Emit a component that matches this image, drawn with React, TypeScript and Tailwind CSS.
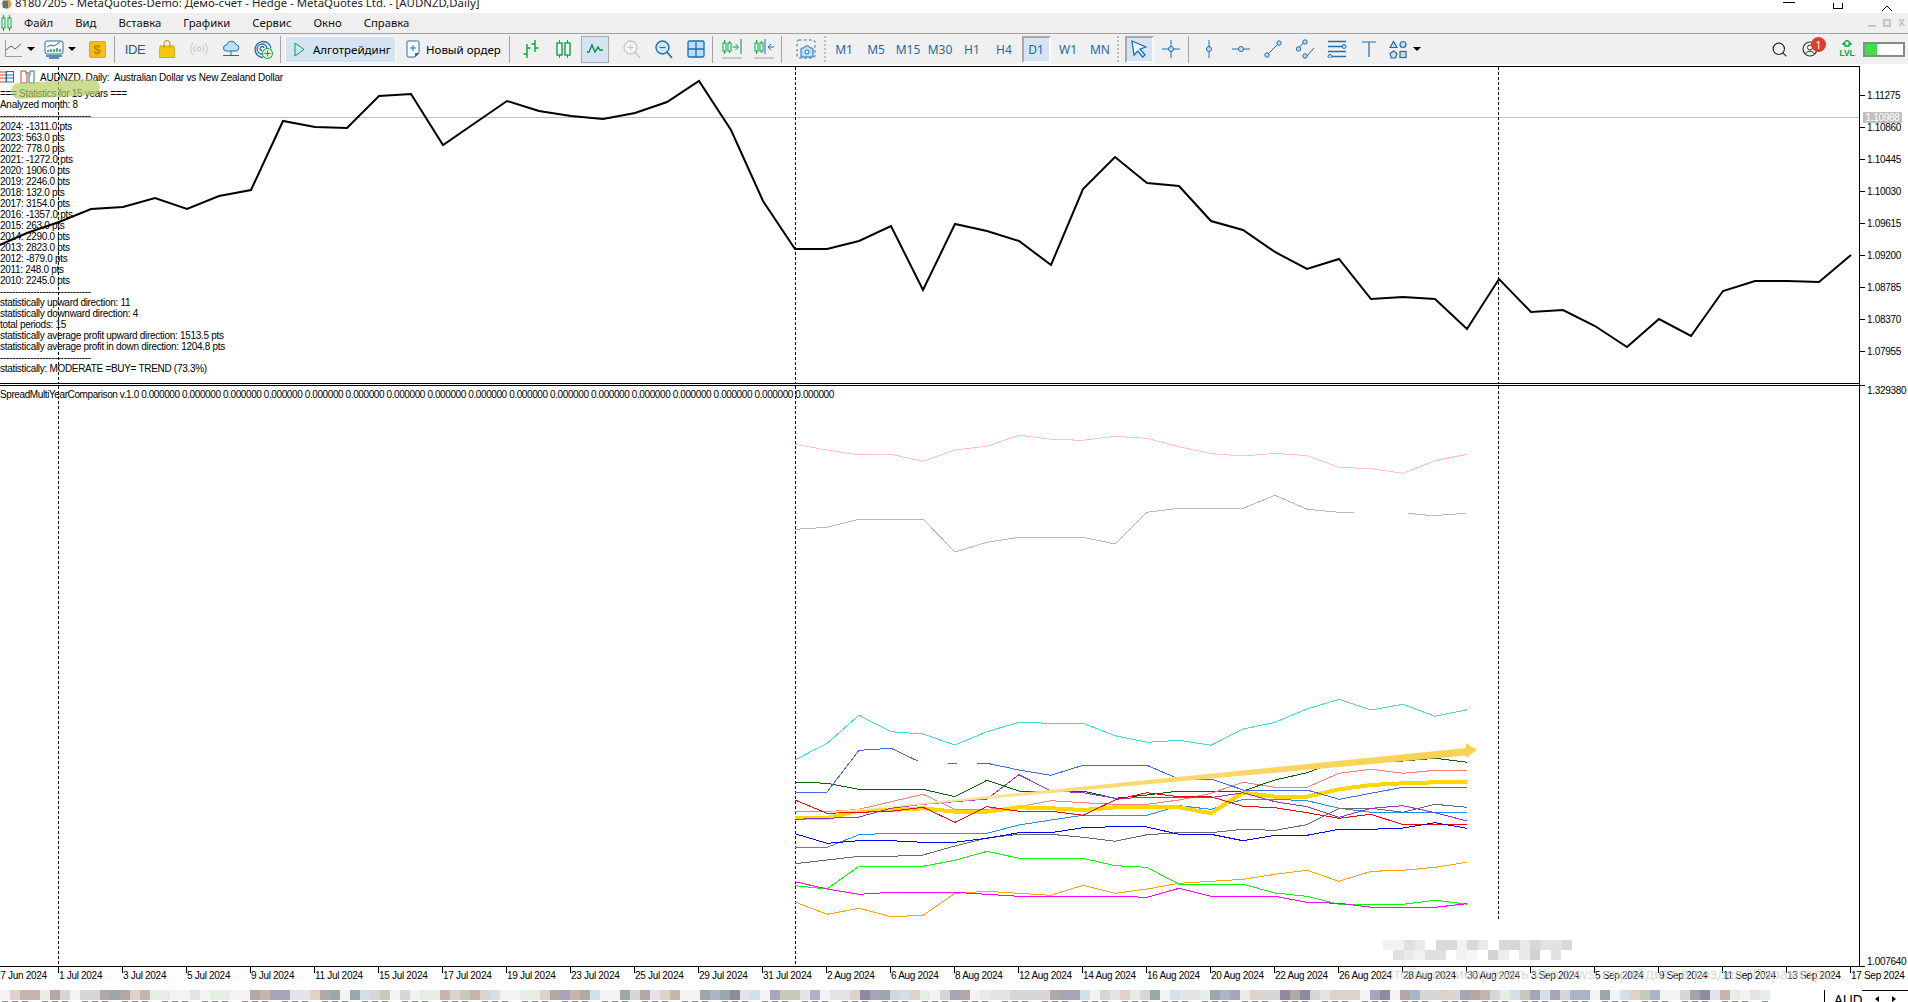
import React from 'react';
import { Search } from 'lucide-react';

const BLUE = '#1c6fb0';
const GREEN = '#00a83c';

const menuItems = ['Файл', 'Вид', 'Вставка', 'Графики', 'Сервис', 'Окно', 'Справка'];
const timeframes = ['M1', 'M5', 'M15', 'M30', 'H1', 'H4', 'D1', 'W1', 'MN'];

const dates = [
  '27 Jun 2024', '1 Jul 2024', '3 Jul 2024', '5 Jul 2024', '9 Jul 2024', '11 Jul 2024', '15 Jul 2024', '17 Jul 2024',
  '19 Jul 2024', '23 Jul 2024', '25 Jul 2024', '29 Jul 2024', '31 Jul 2024', '2 Aug 2024', '6 Aug 2024', '8 Aug 2024',
  '12 Aug 2024', '14 Aug 2024', '16 Aug 2024', '20 Aug 2024', '22 Aug 2024', '26 Aug 2024', '28 Aug 2024', '30 Aug 2024',
  '3 Sep 2024', '5 Sep 2024', '9 Sep 2024', '11 Sep 2024', '13 Sep 2024', '17 Sep 2024',
];

const prices = ['1.11275', '1.10860', '1.10445', '1.10030', '1.09615', '1.09200', '1.08785', '1.08370', '1.07955'];

const stats = [
  '=== Statistics for 15 years ===',
  'Analyzed month: 8',
  '------------------------------',
  '2024: -1311.0 pts', '2023: 563.0 pts', '2022: 778.0 pts', '2021: -1272.0 pts', '2020: 1906.0 pts',
  '2019: 2246.0 pts', '2018: 132.0 pts', '2017: 3154.0 pts', '2016: -1357.0 pts', '2015: 263.0 pts',
  '2014: 2290.0 pts', '2013: 2823.0 pts', '2012: -879.0 pts', '2011: 248.0 pts', '2010: 2245.0 pts',
  '------------------------------',
  'statistically upward direction: 11',
  'statistically downward direction: 4',
  'total periods: 15',
  'statistically average profit upward direction: 1513.5 pts',
  'statistically average profit in down direction: 1204.8 pts',
  '------------------------------',
  'statistically: MODERATE =BUY= TREND (73.3%)',
];

// price line, one y per bar, first bar sits at x=-5, 32px apart
const priceLine = [
  247, 233, 222, 209, 207, 198, 209, 196, 190, 121, 127, 128, 96, 94, 145, 123, 101, 111, 116, 119, 113, 102, 81, 130,
  201, 249, 249, 241, 226, 290, 224, 231, 241, 265, 189, 157, 183, 186, 221, 230, 252, 269, 259, 299, 297, 299, 329,
  279, 312, 310, 326, 347, 319, 336, 291, 281, 281, 282, 255,
];

// indicator series, read off the chart: 22 bars from x=795, values measured in zoomed px
const series: { color: string; ys: number[]; width?: number }[] = [
  { color: '#40e0d0', ys: [210, 160, 76, 125, 132, 165, 125, 97, 100, 100, 137, 157, 151, 166, 117, 97, 57, 28, 60, 43, 79, 59] },
  { color: '#006400', ys: [276, 280, 298, 298, 298, 320, 271, 303, 303, 303, 325, 315, 303, 303, 303, 270, 248, 213, 213, 213, 205, 217] },
  { color: '#fa8072', ys: [365, 365, 358, 335, 313, 358, 358, 350, 332, 338, 343, 343, 330, 310, 277, 292, 292, 250, 238, 250, 241, 241] },
  { color: '#1e90ff', ys: [472, 472, 434, 430, 430, 430, 430, 405, 390, 376, 376, 376, 347, 358, 328, 328, 332, 355, 367, 367, 367, 367] },
  { color: '#696969', ys: [521, 510, 499, 499, 495, 468, 444, 433, 433, 442, 454, 434, 428, 428, 418, 421, 404, 355, 355, 367, 343, 352] },
  { color: '#ffd700', ys: [384, 384, 362, 360, 355, 365, 365, 352, 355, 360, 352, 352, 352, 370, 308, 320, 320, 298, 285, 280, 277, 277], width: 4 },
  { color: '#9932cc', ys: [388, 385, 381, 355, 343, 335, 327, 254, 303, 308, 325, 323, 323, 323, 308, 335, 350, 382, 355, 347, 368, 393] },
  { color: '#ff0000', ys: [330, 370, 367, 364, 352, 397, 350, 364, 364, 376, 330, 308, 320, 320, 349, 353, 368, 385, 373, 404, 404, 404] },
  { color: '#0000ff', ys: [431, 460, 452, 452, 457, 457, 445, 428, 428, 413, 410, 411, 433, 433, 452, 436, 436, 418, 418, 414, 398, 415] },
  { color: '#00ff00', ys: [587, 597, 529, 529, 529, 511, 484, 505, 505, 505, 527, 532, 583, 583, 583, 609, 619, 643, 643, 643, 631, 643] },
  { color: '#ffa500', ys: [636, 673, 655, 680, 676, 610, 604, 610, 616, 586, 610, 597, 580, 574, 568, 553, 541, 574, 544, 541, 532, 517] },
  { color: '#ff00ff', ys: [575, 597, 613, 607, 607, 607, 613, 619, 619, 619, 619, 622, 595, 619, 619, 619, 637, 640, 652, 652, 652, 641] },
];

const royalBlue = [
  [[33, 307], [102, 307], [172, 181], [242, 175], [300, 213]],
  [[365, 220], [385, 220]],
  [[430, 220], [451, 220], [521, 240], [590, 256], [660, 226], [730, 226], [799, 226], [869, 267], [939, 267], [1009, 300], [1078, 300], [1148, 300], [1218, 328], [1287, 310], [1357, 292], [1427, 292], [1497, 292]],
];

const pink = [73, 90, 105, 103, 124, 90, 79, 46, 58, 61, 49, 55, 80, 101, 108, 100, 107, 142, 146, 160, 122, 103];
const silver = [
  [[33, 328], [102, 322], [172, 298], [242, 298], [312, 298], [381, 396], [451, 367], [521, 352], [590, 352], [660, 352], [730, 372], [799, 277], [869, 265], [939, 265], [1009, 265], [1078, 226], [1148, 268], [1218, 277], [1250, 277]],
  [[1368, 280], [1420, 287], [1495, 280]],
];

const lowerX = (z: number) => 780 + z / 2.178;
const lowerY = (z: number) => 690 + z / 3;
const upperY = (z: number) => 420 + z / 3;

const pts = (ys: number[], toY: (z: number) => number) => ys.map((y, k) => `${795 + 32 * k},${toY(y).toFixed(1)}`).join(' ');
const seg = (s: number[][], toY: (z: number) => number) => s.map(([x, y]) => `${lowerX(x).toFixed(1)},${toY(y).toFixed(1)}`).join(' ');

// blurred tab strip, one letter per 10px cell
const palette: Record<string, string> = {
  a: '#f3f3f3', b: '#e4e4e8', c: '#d6d6d6', d: '#c6b5ac', e: '#b3a8a6', f: '#9aa8aa', g: '#a9a5b8', h: '#e6ede4',
  i: '#d2e0ea', j: '#8f8b9e', k: '#dfd2c9', l: '#c6cbb9', m: '#a9b6c8',
};
const strip =
  'akddhecaccefekdhhaabahhaaedggbbkefaficlacahhdkldkiaahhkegdeiaafcebkdaafmfjbiagllbmabbkjgfcikhacgeahbbcccceggiacbkhcfaibbhfmghkccjejcbkkkagjaemcckcgedchilgigcmmafaiklmaacfjbdhabh';
const mosaic = [
  { x: 1383, y: 940, row: ['#f1f1f1', '#f1f1f1', '#dfdfdf', '#e9e9e9', '#ffffff', '#d9d9d9', '#d9d9d9', '#f1f1f1', '#d9d9d9', '#e9e9e9', '#ffffff', '#d7d7d7', '#d7d7d7', '#e9e9e9', '#d7d7d7', '#e2e2e2', '#e2e2e2', '#d9d9d9'] },
  { x: 1393, y: 950, row: ['#e0e0e0', '#e9e9e9', '#f1f1f1', '#e0e0e0', '#dfdfdf', '#ffffff', '#f1f1f1', '#f6f6f6', '#ffffff', '#d2d2d2', '#ededed', '#ffffff', '#e9e9e9', '#d2d2d2', '#ffffff', '#e2e2e2'] },
];

function Slot({ children, className = 'w-[32px]' }: { children?: React.ReactNode; className?: string }) {
  return <div className={`flex h-full shrink-0 items-center justify-center ${className}`}>{children}</div>;
}

function Sep({ className = '' }: { className?: string }) {
  return <div className={`h-[27px] w-px shrink-0 bg-[#a3a3a3] ${className}`} />;
}

function Grip({ className = '' }: { className?: string }) {
  return <div className={`h-[26px] w-[2px] shrink-0 border-l-2 border-dotted border-[#bdbdbd] ${className}`} />;
}

function Caret() {
  return <div className="h-0 w-0 border-x-[4px] border-t-[4px] border-x-transparent border-t-black" />;
}

const I = ({ w = 20, h = 20, children }: { w?: number; h?: number; children: React.ReactNode }) => (
  <svg width={w} height={h} viewBox={`0 0 ${w} ${h}`} fill="none">{children}</svg>
);

function Toolbar() {
  return (
    <div className="flex h-[30px] shrink-0 items-center bg-[#f0f0f0] text-[12px]">
      <Slot className="w-[24px] pl-[2px]">
        <I w={18} h={18}><path d="M1.5 0v16.5H18" stroke="#9a9a9a" /><path d="M2 10l5-4 4 3 6-5" stroke={BLUE} /></I>
      </Slot>
      <Slot className="w-[14px]"><Caret /></Slot>
      <Slot className="ml-[4px] w-[24px]">
        <I w={20} h={19}>
          <rect x="1" y="1" width="18" height="13" rx="2" stroke={BLUE} fill="#fff" />
          <path d="M3 7l4-2 3 1 6-4" stroke={BLUE} />
          <path d="M4 12v-2M7 12V9M10 12v-3M13 12V8M16 12V9" stroke={GREEN} strokeWidth="1.5" />
          <path d="M2 16h16M5 18h10" stroke={BLUE} strokeWidth="1.4" />
        </I>
      </Slot>
      <Slot className="w-[12px]"><Caret /></Slot>
      <Slot className="ml-[3px] w-[32px]">
        <div className="flex h-[17px] w-[17px] items-center justify-center rounded-[2px] border border-[#e2a800] bg-[#f7bd12] font-['Liberation_Sans',sans-serif] text-[13px] font-bold leading-none text-[#bc8500]">$</div>
      </Slot>
      <Sep className="mx-[1px]" />
      <div className="w-[3px] shrink-0" />
      <Slot><span className="font-['Liberation_Sans',sans-serif] text-[13px] tracking-[-0.4px] text-[#15609f]">IDE</span></Slot>
      <Slot>
        <I w={16} h={18}>
          <path d="M1 6h14l1 11.5H0z" fill="#f8c80e" stroke="#d9a514" />
          <path d="M5 8V3.5a3 3 0 0 1 6 0V8" stroke="#c08d10" />
        </I>
      </Slot>
      <Slot>
        <I w={18} h={14}>
          <circle cx="9" cy="7" r="2" stroke="#c4c4c4" />
          <path d="M5.5 3.5a5 5 0 0 0 0 7M12.5 3.5a5 5 0 0 1 0 7M3 1a9 9 0 0 0 0 12M15 1a9 9 0 0 1 0 12" stroke="#c4c4c4" />
        </I>
      </Slot>
      <Slot>
        <I w={18} h={18}>
          <path d="M4.5 11a3 3 0 0 1 0-6 5 5 0 0 1 9.5-.5 3.3 3.3 0 0 1 .2 6.5z" fill="#bfe0f7" stroke={BLUE} />
          <path d="M9 11v4M1 15.5h16" stroke={BLUE} />
        </I>
      </Slot>
      <Slot>
        <I w={19} h={19}>
          <path d="M9 17.5a8 8 0 1 1 8-9M8 14a5 5 0 1 1 5-6M8 10.5a2 2 0 1 1 2-2.5" stroke={BLUE} strokeWidth="1.3" />
          <circle cx="13.5" cy="13.5" r="5" fill="#d8f5df" stroke={GREEN} />
          <path d="M13.5 10.5v6M10.5 13.5h6" stroke={GREEN} />
        </I>
      </Slot>
      <Sep className="mx-[1px]" />
      <div className="ml-[3px] flex h-[27px] w-[111px] shrink-0 items-center border border-[#f7f9fb] bg-[#d5e4f2]">
        <div className="ml-[8px]">
          <I w={11} h={15}><path d="M1 1l9 6.5L1 14z" stroke={GREEN} /></I>
        </div>
        <span className="ml-[8px] font-['Noto_Sans',sans-serif] text-[11.5px] text-black">Алготрейдинг</span>
      </div>
      <div className="flex h-[27px] w-[112px] shrink-0 items-center pl-[10px]">
        <I w={14} h={18}>
          <path d="M2 1h10a1 1 0 0 1 1 1v11l-4 4H2a1 1 0 0 1-1-1V2a1 1 0 0 1 1-1z" fill="#fff" stroke={BLUE} />
          <path d="M7 5v6M4 8h6" stroke={BLUE} />
          <path d="M9 17v-4h4z" fill={BLUE} />
        </I>
        <span className="ml-[6px] font-['Noto_Sans',sans-serif] text-[11.5px] text-black">Новый ордер</span>
      </div>
      <Sep className="mx-[1px]" />
      <div className="w-[4px] shrink-0" />
      <Slot>
        <I w={16} h={18}>
          <path d="M4 4v14M0.5 14H4M4 8h3.5M12 0v12M8.5 4H12M12 8h3.5" stroke={GREEN} strokeWidth="1.4" />
        </I>
      </Slot>
      <Slot>
        <I w={15} h={18}>
          <path d="M3.5 0v18M11.5 0v18" stroke={GREEN} />
          <rect x="1" y="3" width="5" height="12" fill="#fff" stroke={GREEN} strokeWidth="1.4" />
          <rect x="9" y="3" width="5" height="12" fill="#fff" stroke={GREEN} strokeWidth="1.4" />
        </I>
      </Slot>
      <Slot>
        <div className="flex h-[27px] w-[28px] items-center justify-center border border-[#a9a9a9] bg-[#d5e4f2]">
          <I w={17} h={12}><path d="M0 9h2l3-7 3 7 3-5 2 3h3" stroke="#008a3a" strokeWidth="1.3" /></I>
        </div>
      </Slot>
      <div className="w-[5px] shrink-0" />
      <Slot>
        <I w={18} h={19}>
          <circle cx="7.5" cy="7.5" r="6.5" fill="#f4f4f4" stroke="#c8c8c8" strokeWidth="1.4" />
          <path d="M12 12l5 6" stroke="#c8c8c8" strokeWidth="1.6" />
          <path d="M7.5 4.5v6M4.5 7.5h6" stroke="#c8c8c8" />
        </I>
      </Slot>
      <Slot>
        <I w={18} h={19}>
          <circle cx="7.5" cy="7.5" r="6.5" fill="#cfe8fa" stroke={BLUE} strokeWidth="1.4" />
          <path d="M12 12l5 6" stroke={BLUE} strokeWidth="1.6" />
          <path d="M4.5 7.5h6" stroke={BLUE} strokeWidth="1.2" />
        </I>
      </Slot>
      <Slot>
        <I w={18} h={18}>
          <rect x="1" y="1" width="16" height="16" rx="1.5" fill="#b9e0fa" stroke={BLUE} strokeWidth="1.3" />
          <path d="M9 1v16M1 9h16" stroke={BLUE} strokeWidth="1.3" />
        </I>
      </Slot>
      <Sep className="mr-[3px]" />
      <Slot>
        <I w={20} h={20}>
          <path d="M2.5 1v14M7.5 2v12" stroke={GREEN} />
          <rect x="1" y="4" width="3" height="8" fill="#fff" stroke={GREEN} />
          <rect x="6" y="4" width="3" height="8" fill="#fff" stroke={GREEN} />
          <path d="M19 0v15" stroke={BLUE} />
          <path d="M10.5 8H16M13.5 5l3 3-3 3" stroke={GREEN} />
          <path d="M0 19h20" stroke="#a3a3a3" />
        </I>
      </Slot>
      <Slot>
        <I w={20} h={20}>
          <path d="M2.5 1v14M7.5 2v12" stroke={GREEN} />
          <rect x="1" y="4" width="3" height="8" fill="#fff" stroke={GREEN} />
          <rect x="6" y="4" width="3" height="8" fill="#fff" stroke={GREEN} />
          <path d="M11 0v15" stroke={BLUE} />
          <path d="M14 8h6M17 5l-3 3 3 3" stroke={BLUE} />
          <path d="M0 19h20" stroke="#a3a3a3" />
        </I>
      </Slot>
      <Sep className="ml-[1px]" />
      <Slot className="ml-[8px] w-[32px]">
        <I w={20} h={20}>
          <rect x="1" y="1" width="18" height="18" rx="2" stroke={BLUE} strokeDasharray="2.5 2.5" />
          <path d="M6 9h2l1.5-2h3L14 9h2a1 1 0 0 1 1 1v8H5v-8a1 1 0 0 1 1-1z" fill="#bfe0f7" stroke={BLUE} />
          <circle cx="11" cy="13" r="2" fill="#fff" stroke={BLUE} />
        </I>
      </Slot>
      <Grip className="mx-[2px]" />
      {timeframes.map((t) => (
        <Slot key={t}>
          {t === 'D1' ? (
            <div className="flex h-[27px] w-[29px] items-center justify-center border-2 border-t-[#a9a9a9] border-l-[#a9a9a9] border-r-[#f7f9fb] border-b-[#f7f9fb] bg-[#d5e4f2] font-['Noto_Sans',sans-serif] text-[12px] text-[#1f69a6]">{t}</div>
          ) : (
            <span className="font-['Noto_Sans',sans-serif] text-[12px] text-[#1f69a6]">{t}</span>
          )}
        </Slot>
      ))}
      <Grip className="ml-[1px] mr-[4px]" />
      <Slot>
        <div className="flex h-[27px] w-[29px] items-center justify-center border-2 border-t-[#a9a9a9] border-l-[#a9a9a9] border-r-[#f7f9fb] border-b-[#f7f9fb] bg-[#d5e4f2]">
          <I w={16} h={18}><path d="M1 1l14 6-6 2 5 6-2.5 2-4.5-6-4 4z" fill="#eef6fc" stroke={BLUE} strokeWidth="1.3" /></I>
        </div>
      </Slot>
      <Slot>
        <I w={18} h={18}><path d="M9 0v18M0 9h18" stroke={BLUE} /><circle cx="9" cy="9" r="2.5" fill="#bfe0f7" stroke={BLUE} /></I>
      </Slot>
      <Sep className="mx-[1px]" />
      <div className="w-[3px] shrink-0" />
      <Slot>
        <I w={8} h={18}><path d="M4 0v18" stroke={BLUE} /><circle cx="4" cy="9" r="2.5" fill="#bfe0f7" stroke={BLUE} /></I>
      </Slot>
      <Slot>
        <I w={18} h={8}><path d="M0 4h18" stroke={BLUE} /><circle cx="9" cy="4" r="2.5" fill="#bfe0f7" stroke={BLUE} /></I>
      </Slot>
      <Slot>
        <I w={18} h={18}>
          <path d="M3.5 14.5l11-11" stroke={BLUE} />
          <circle cx="3" cy="15" r="2.2" fill="#bfe0f7" stroke={BLUE} />
          <circle cx="15" cy="3" r="2.2" fill="#bfe0f7" stroke={BLUE} />
        </I>
      </Slot>
      <Slot>
        <I w={19} h={20}>
          <path d="M1 11l7-8M10 18l8-9" stroke={BLUE} />
          <circle cx="2.5" cy="10" r="2.2" fill="#bfe0f7" stroke={BLUE} />
          <circle cx="9" cy="3" r="2.2" fill="#bfe0f7" stroke={BLUE} />
          <circle cx="9" cy="17" r="2.2" fill="#bfe0f7" stroke={BLUE} />
        </I>
      </Slot>
      <Slot>
        <I w={20} h={18}>
          <path d="M1 1.5h18M1 6.5h15M1 11.5h18M5 16.5h14" stroke={BLUE} strokeWidth="1.3" />
          <circle cx="17" cy="6.5" r="2" fill="#bfe0f7" stroke={BLUE} />
          <circle cx="3" cy="16.5" r="2" fill="#bfe0f7" stroke={BLUE} />
        </I>
      </Slot>
      <Slot>
        <I w={14} h={16}><path d="M0 1h14M7 1v15" stroke={BLUE} strokeWidth="1.2" /></I>
      </Slot>
      <Slot className="w-[26px]">
        <I w={18} h={19}>
          <path d="M4.5 1.5L8 7.5H1z" fill="#bfe0f7" stroke={BLUE} strokeWidth="1.2" />
          <circle cx="14" cy="4.5" r="3" fill="#bfe0f7" stroke={BLUE} strokeWidth="1.2" />
          <path d="M4.5 11l3.5 2.5-1.3 4.5H2.3L1 13.5z" fill="#bfe0f7" stroke={BLUE} strokeWidth="1.2" />
          <rect x="11" y="11.5" width="6" height="6" fill="#bfe0f7" stroke={BLUE} strokeWidth="1.2" />
        </I>
      </Slot>
      <Slot className="w-[12px]"><Caret /></Slot>
      <div className="flex-1" />
      <Slot className="w-[20px]"><Search size={17} strokeWidth={1.6} color="#222222" /></Slot>
      <Slot className="relative ml-[9px] w-[24px]">
        <I w={16} h={16}>
          <circle cx="8" cy="8" r="7" stroke="#333333" strokeWidth="1.2" />
          <circle cx="8" cy="6.5" r="2.5" stroke="#333333" />
          <path d="M3.5 13a5 5 0 0 1 9 0" stroke="#333333" />
        </I>
        <div className="absolute left-[13px] top-[3px] flex h-[15px] w-[15px] items-center justify-center rounded-full bg-[#e03c28] font-['Noto_Sans',sans-serif] text-[11px] leading-none text-white">1</div>
      </Slot>
      <div className="ml-[17px] flex w-[16px] shrink-0 flex-col items-center">
        <I w={10} h={9}><path d="M5 0l4 4H7v2H3V4H1z" fill="#fff" stroke={GREEN} strokeWidth="1.3" /></I>
        <span className="font-['Liberation_Sans',sans-serif] text-[8.5px] font-bold leading-[9px] tracking-[-0.2px] text-[#00a83c]">LVL</span>
      </div>
      <div className="ml-[8px] mr-[3px] flex h-[15px] w-[42px] shrink-0 border-2 border-[#8a8a8a] bg-white">
        <div className="h-full w-[12px] bg-[#3fe03f]" />
      </div>
    </div>
  );
}

function TopPanel() {
  return (
    <div className="relative h-[316px] overflow-hidden bg-white">
      <svg className="absolute inset-0" width="1859" height="316" viewBox="0 67 1859 316" fill="none" shapeRendering="crispEdges">
        <path d="M0 117.5H1859" stroke="#c0c0c0" />
        <path d="M58.5 67V383M795.5 67V383M1498.5 67V383" stroke="#000" strokeDasharray="3 2" />
        <polyline points={priceLine.map((y, i) => `${-5 + 32 * i},${y}`).join(' ')} stroke="#000" strokeWidth="2" shapeRendering="auto" />
      </svg>
      <div className="absolute left-0 top-[3px] flex h-[14px] items-center">
        <svg width="15" height="14" viewBox="0 0 15 14" fill="none">
          <path d="M0 2h6v10H0M0 5h6M0 8h6" stroke="#e03c28" />
          <rect x="6.5" y="1.5" width="7" height="10.5" stroke={BLUE} />
          <path d="M7 5h6M7 8h6" stroke={BLUE} />
        </svg>
        <svg className="ml-[5px]" width="15" height="14" viewBox="0 0 15 14" fill="none">
          <path d="M1 1h5v3h1v9H1z" stroke="#e03c28" />
          <path d="M9 13V5h1V1h4v12z" stroke={BLUE} />
          <path d="M6 2h3v2H6z" fill="#9a9a9a" />
        </svg>
        <span className="ml-[5px] whitespace-pre tracking-[-0.2px] text-black">AUDNZD, Daily:  Australian Dollar vs New Zealand Dollar</span>
      </div>
      <div className="absolute left-0 top-[21px] whitespace-pre leading-[11px] text-black">
        {stats.map((line, i) => (
          <div key={i} className="h-[11px]">{line}</div>
        ))}
      </div>
      <div className="absolute left-[11px] top-[14px] h-[16px] w-[89px] -rotate-3 rounded-[9px] bg-[#b4cf63]/70" />
    </div>
  );
}

function BottomPanel() {
  return (
    <div className="relative flex-1 overflow-hidden bg-white">
      <svg className="absolute inset-0" width="1859" height="580" viewBox="0 386 1859 580" fill="none" shapeRendering="crispEdges">
        <defs>
          <linearGradient id="arrowFade" x1="830" y1="812" x2="1477" y2="750" gradientUnits="userSpaceOnUse">
            <stop offset="0" stopColor="#fdf0c4" />
            <stop offset="0.4" stopColor="#f9da76" />
            <stop offset="1" stopColor="#f8d150" />
          </linearGradient>
        </defs>
        <path d="M58.5 386V966M795.5 386V966M1498.5 386V921" stroke="#000" strokeDasharray="3 2" />
        <polyline points={pts(pink, upperY)} stroke="#ffc0cb" />
        {silver.map((s, i) => <polyline key={i} points={seg(s, upperY)} stroke="#b8b8b8" />)}
        {series.map((s) => (
          <polyline key={s.color} points={pts(s.ys, lowerY)} stroke={s.color} strokeWidth={s.width ?? 1} />
        ))}
        {royalBlue.map((s, i) => <polyline key={i} points={seg(s, lowerY)} stroke="#4169e1" />)}
        <polygon points="830,812 1466,748 1466,743 1477,750 1466,758 1466,755.5 830,813" fill="url(#arrowFade)" shapeRendering="auto" />
      </svg>
      <div className="absolute left-0 top-[3px] whitespace-pre tracking-[-0.4px] text-black">
        SpreadMultiYearComparison v.1.0 0.000000 0.000000 0.000000 0.000000 0.000000 0.000000 0.000000 0.000000 0.000000 0.000000 0.000000 0.000000 0.000000 0.000000 0.000000 0.000000 0.000000
      </div>
      <svg className="absolute left-[1383px] top-[554px]" width="190" height="20" viewBox="1383 940 190 20" shapeRendering="crispEdges">
        {mosaic.map((m) => m.row.map((c, i) => <rect key={`${m.y}-${i}`} x={m.x + i * 10.5} y={m.y} width="10.5" height="10" fill={c} />))}
      </svg>
    </div>
  );
}

function PriceAxis() {
  return (
    <div className="relative flex w-[49px] shrink-0 flex-col text-black">
      <div className="flex h-[318px] shrink-0 flex-col pt-[13px]">
        {prices.map((p) => (
          <div key={p} className="flex h-[32px] shrink-0 items-center">
            <div className="h-px w-[5px] bg-black" />
            <span className="ml-[2px]">{p}</span>
          </div>
        ))}
      </div>
      <div className="absolute left-[3px] top-[46px] flex h-[11px] w-[39px] items-center justify-center bg-[#c0c0c0] text-white">1.10988</div>
      <div className="flex flex-1 flex-col justify-between">
        <div className="flex h-[12px] items-start">
          <div className="mt-[1px] h-px w-[5px] bg-black" />
          <span className="ml-[2px] mt-[1px]">1.329380</span>
        </div>
        <div className="flex h-[11px] items-end">
          <div className="h-px w-[5px] bg-black" />
          <span className="ml-[2px]">1.007640</span>
        </div>
      </div>
    </div>
  );
}

function DateAxis() {
  return (
    <div className="flex h-[23px] shrink-0 overflow-hidden bg-white text-black">
      <div className="ml-[-6px] flex">
        {dates.map((d) => (
          <div key={d} className="relative w-[64px] shrink-0 whitespace-pre pl-[1px] pt-[3px]">
            <div className="absolute left-0 top-0 h-[6px] w-px bg-black" />
            {d}
          </div>
        ))}
      </div>
    </div>
  );
}

function TabStrip() {
  return (
    <div className="flex h-[13px] shrink-0 bg-white">
      <svg width="1824" height="13" viewBox="0 0 1824 13" shapeRendering="crispEdges" className="shrink-0">
        {strip.split('').map((ch, i) => (
          <rect key={i} x={i * 10} y="0" width="10" height="10" fill={palette[ch]} />
        ))}
        {strip.split('').map((ch, i) => (i % 4 !== 3 ? <rect key={`t${i}`} x={i * 10 + 2} y="11" width="6" height="2" fill="#8d8d8d" /> : null))}
      </svg>
      <div className="h-full w-px bg-black" />
      <div className="flex w-[37px] justify-end overflow-hidden pl-[9px]">
        <span className="w-full overflow-hidden whitespace-pre font-['Noto_Sans',sans-serif] text-[14px] leading-[19px] text-black">AUDNZD</span>
      </div>
      <div className="flex flex-1 items-start justify-around border-t border-black px-[6px] pt-[5px]">
        <div className="h-0 w-0 border-y-[3px] border-r-[4px] border-y-transparent border-r-black" />
        <div className="h-0 w-0 border-y-[3px] border-l-[4px] border-y-transparent border-l-black" />
      </div>
    </div>
  );
}

export default function App() {
  return (
    <div className="relative flex h-[1002px] w-[1908px] flex-col overflow-hidden bg-white font-['Liberation_Sans',sans-serif] text-[10px] leading-[11px] tracking-[-0.3px]">
      {/* Title bar, cut off by the top of the capture */}
      <div className="flex h-[13px] shrink-0 items-end overflow-hidden bg-white pb-[2px] pl-[1px] font-['Noto_Sans',sans-serif] text-[11.4px] leading-[16px] tracking-normal text-[#222222]">
        <svg width="11" height="12" viewBox="0 0 11 12" fill="none"><circle cx="5.5" cy="5" r="5" fill="#e8a33d" /><rect x="2" y="2" width="5" height="7" fill="#3a78c2" /></svg>
        <span className="ml-[3px]">81807205 - MetaQuotes-Demo: Демо-счет - Hedge - MetaQuotes Ltd. - [AUDNZD,Daily]</span>
        <div className="flex-1" />
        <div className="mb-[8px] mr-[38px] h-[1px] w-[12px] bg-black" />
        <div className="mb-[2px] mr-[38px] h-[6px] w-[10px] border border-t-0 border-black" />
        <div className="mr-[15px] h-[6px] w-[12px] overflow-hidden">
          <svg width="12" height="6" viewBox="0 6 12 6" fill="none"><path d="M1 12l5-5 5 5" stroke="#000" /></svg>
        </div>
      </div>

      {/* Menu */}
      <div className="flex h-[20px] shrink-0 items-center gap-[22px] bg-[#efefef] pb-[1px] font-['Noto_Sans',sans-serif] text-[11.3px] tracking-normal text-[#111111]">
        <svg className="absolute left-[1px] top-[15px]" width="11" height="16" viewBox="0 0 11 16" fill="none">
          <path d="M2.5 0v16M8.5 0v16" stroke={GREEN} />
          <rect x="1" y="3" width="3" height="10" fill="#fff" stroke={GREEN} />
          <rect x="7" y="3" width="3" height="10" fill="#fff" stroke={GREEN} />
        </svg>
        <div className="ml-[2px] w-[0px]" />
        {menuItems.map((m) => <span key={m}>{m}</span>)}
        <div className="flex-1" />
        <div className="mr-[3px] flex items-center gap-[7px] text-[#c4c4c4]">
          <div className="mt-[7px] h-[2px] w-[8px] bg-[#c4c4c4]" />
          <div className="h-[8px] w-[8px] border-2 border-[#c4c4c4]" />
          <span className="font-['Liberation_Sans',sans-serif] text-[12px] font-bold">x</span>
        </div>
      </div>
      <div className="h-px shrink-0 bg-[#a3a3a3]" />

      <div className="font-['Liberation_Sans',sans-serif] tracking-normal"><Toolbar /></div>
      <div className="h-[2px] shrink-0 bg-white" />

      {/* Charts */}
      <div className="flex h-[901px] shrink-0">
        <div className="flex w-[1860px] shrink-0 flex-col border-r border-t border-black">
          <TopPanel />
          <div className="h-px bg-black" />
          <div className="h-px bg-white" />
          <div className="h-px bg-black" />
          <BottomPanel />
          <div className="h-px bg-black" />
        </div>
        <PriceAxis />
      </div>
      <DateAxis />
      <TabStrip />

      {/* Windows activation notice over the axis */}
      <div className="absolute left-[1384px] top-[964px] whitespace-pre font-['Noto_Sans',sans-serif] text-[14.5px] leading-[18px] tracking-normal text-[#cfcfcf]/80">
        Чтобы активировать Windows, перейдите в раздел "Параметры".
      </div>
    </div>
  );
}
